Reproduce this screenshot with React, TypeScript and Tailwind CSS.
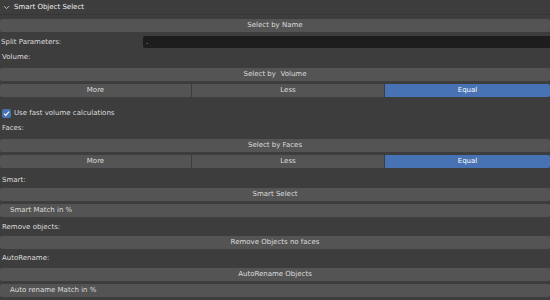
import React from 'react'

const font = { fontFamily: '"DejaVu Sans", sans-serif' }

function Btn({ label, mt, left }: { label: string; mt: string; left?: boolean }) {
  return (
    <div
      className={`${mt} h-[13px] rounded-[2px] bg-[#545454] flex items-center whitespace-pre text-[7px] text-[#dddddd] ${left ? 'pl-[10px]' : 'justify-center'}`}
    >
      {label}
    </div>
  )
}

function Label({ text, mt }: { text: string; mt: string }) {
  return <div className={`${mt} h-[13px] flex items-center pl-[2px] text-[7px] text-[#dddddd]`}>{text}</div>
}

function Segment({ mt }: { mt: string }) {
  return (
    <div className={`${mt} h-[13px] flex text-[7px] text-[#dddddd]`}>
      <div className="w-[191px] bg-[#545454] rounded-l-[2px] flex items-center justify-center">More</div>
      <div className="w-[192px] ml-px bg-[#545454] flex items-center justify-center">Less</div>
      <div className="flex-1 ml-px bg-[#4772b3] rounded-r-[2px] flex items-center justify-center text-white">Equal</div>
    </div>
  )
}

export default function App() {
  return (
    <div className="w-[550px] h-[300px] bg-[#3d3d3d] overflow-hidden flex flex-col" style={font}>
      <div className="h-[15px] flex items-center gap-[4px] pl-[3px] text-[7px] text-[#eeeeee] border-b border-[#363636]">
        <svg width="7" height="7" viewBox="0 0 7 7">
          <path d="M1 2.2 L3.5 4.7 L6 2.2" stroke="#cfcfcf" strokeWidth="0.9" fill="none" />
        </svg>
        <span>Smart Object Select</span>
      </div>
      <Btn label="Select by Name" mt="mt-[4px]" />
      <div className="mt-[4px] h-[12px] flex items-center text-[7px] text-[#dddddd]">
        <div className="w-[143px] pl-[1px]">Split Parameters:</div>
        <div className="flex-1 h-full bg-[#1d1d1d] rounded-l-[2px] flex items-center pl-[3px] text-[#bbbbbb]">.</div>
      </div>
      <Label text="Volume:" mt="mt-[3px]" />
      <Btn label="Select by  Volume" mt="mt-[4px]" />
      <Segment mt="mt-[3px]" />
      <div className="mt-[10px] h-[13px] flex items-center gap-[3px] pl-[2px] text-[7px] text-[#dddddd]">
        <div className="w-[9px] h-[9px] rounded-[2px] bg-[#4772b3] flex items-center justify-center">
          <svg width="7" height="7" viewBox="0 0 7 7">
            <path d="M1 3.6 L2.8 5.4 L6 1.6" stroke="#ffffff" strokeWidth="1.1" fill="none" />
          </svg>
        </div>
        <span>Use fast volume calculations</span>
      </div>
      <Label text="Faces:" mt="mt-[2px]" />
      <Btn label="Select by Faces" mt="mt-[4px]" />
      <Segment mt="mt-[3px]" />
      <Label text="Smart:" mt="mt-[6px]" />
      <Btn label="Smart Select" mt="mt-[1px]" />
      <Btn label="Smart Match in %" mt="mt-[3px]" left />
      <Label text="Remove objects:" mt="mt-[4px]" />
      <Btn label="Remove Objects no faces" mt="mt-[2px]" />
      <Label text="AutoRename:" mt="mt-[3px]" />
      <Btn label="AutoRename Objects" mt="mt-[3px]" />
      <Btn label="Auto rename Match in %" mt="mt-[3px]" left />
    </div>
  )
}
